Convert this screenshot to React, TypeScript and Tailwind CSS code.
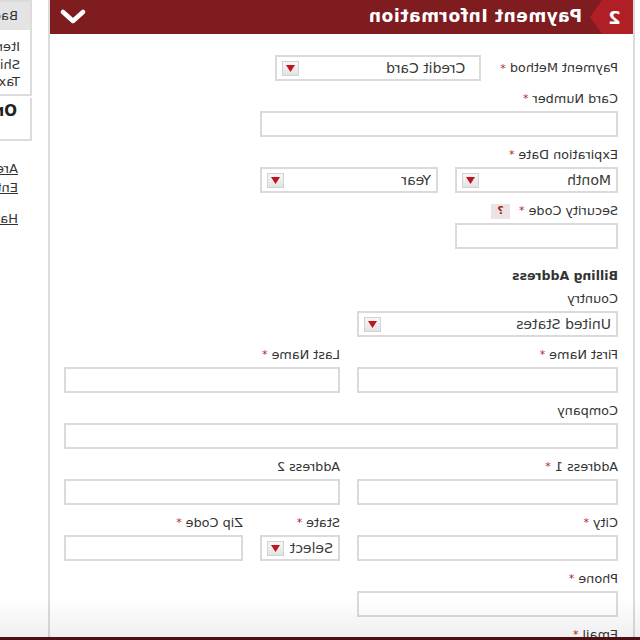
import React from "react";

const FONT = { fontFamily: '"DejaVu Sans", Verdana, sans-serif' };

function Label({ text, req, help }: { text: string; req?: boolean; help?: boolean }) {
  return (
    <div className="h-[18px] leading-[18px] mb-[3px] text-[12.8px] text-[#333] flex items-center whitespace-nowrap">
      <span>{text}</span>
      {req && <span className="ml-[4px] text-[#b3262c] text-[11px]">*</span>}
      {help && (
        <span className="ml-[9px] w-[19px] h-[15px] bg-[#ece4e4] text-[#a51c22] text-[11px] font-bold flex items-center justify-center">
          ?
        </span>
      )}
    </div>
  );
}

function Input({ className = "" }: { className?: string }) {
  return <div className={`h-[26px] border-2 border-[#dadada] bg-white ${className}`} />;
}

function Select({ value, className = "" }: { value: string; className?: string }) {
  return (
    <div
      className={`h-[26px] border-2 border-[#dadada] bg-white flex items-center pr-[5px] text-[14px] text-[#3a3a3a] ${className}`}
    >
      <span className="whitespace-nowrap">{value}</span>
      <span className="ml-auto w-[17px] h-[15px] border border-[#d2d2d2] bg-gradient-to-b from-[#f7f7f7] to-[#e3e3e3] flex items-center justify-center shrink-0">
        <svg width="9" height="7" viewBox="0 0 9 7">
          <path d="M0 0h9L4.5 7z" fill="#c0141c" />
        </svg>
      </span>
    </div>
  );
}

function Field({
  label,
  req,
  help,
  children,
}: {
  label?: string;
  req?: boolean;
  help?: boolean;
  children: React.ReactNode;
}) {
  return (
    <div>
      {label ? <Label text={label} req={req} help={help} /> : <div className="h-[21px]" />}
      {children}
    </div>
  );
}

function Payment() {
  return (
    <div className="w-[587px] ml-[5px] shrink-0 border-x-2 border-[#dcdcdc] h-[640px] bg-white">
      <div className="h-[34px] bg-[#7e1c1f] flex items-center text-white">
        <div className="h-full w-[31px] bg-[#b01f25] flex items-center justify-center pl-[6px] text-[18px] font-bold">
          2
        </div>
        <svg width="12" height="34" viewBox="0 0 12 34" className="shrink-0">
          <path d="M0 0L12 17L0 34z" fill="#b01f25" />
        </svg>
        <div className="ml-[8px] text-[17px] font-bold tracking-[0.6px]">Payment Information</div>
        <svg width="26" height="16" viewBox="0 0 26 16" className="ml-auto mr-[10px]">
          <path d="M3 3l10 9 10-9" fill="none" stroke="#fff" strokeWidth="4.5" strokeLinecap="round" strokeLinejoin="round" />
        </svg>
      </div>

      <div className="pl-[15px] pt-[21px]">
        <div className="flex items-center">
          <div className="text-[12.8px] text-[#333] whitespace-nowrap">
            Payment Method <span className="text-[#b3262c] text-[11px]">*</span>
          </div>
          <Select value="Credit Card" className="w-[206px] ml-[19px] pl-[14px]" />
        </div>

        <div className="w-[358px] flex flex-col gap-[9px] mt-[9px]">
          <Field label="Card Number" req>
            <Input />
          </Field>
          <Field label="Expiration Date" req>
            <div className="flex gap-[17px]">
              <Select value="Month" className="w-[163px] pl-[5px]" />
              <Select value="Year" className="w-[178px] pl-[5px]" />
            </div>
          </Field>
          <Field label="Security Code" req help>
            <Input className="w-[163px]" />
          </Field>
        </div>

        <div className="mt-[18px] h-[18px] leading-[18px] text-[12.5px] font-bold text-[#333]">Billing Address</div>

        <div className="w-[554px] grid grid-cols-[261px_276px] gap-x-[17px] gap-y-[9px] mt-[5px]">
          <Field label="Country">
            <Select value="United States" className="pl-[5px]" />
          </Field>
          <div />
          <Field label="First Name" req>
            <Input />
          </Field>
          <Field label="Last Name" req>
            <Input />
          </Field>
          <div className="col-span-2">
            <Field label="Company">
              <Input />
            </Field>
          </div>
          <Field label="Address 1" req>
            <Input />
          </Field>
          <Field label="Address 2">
            <Input />
          </Field>
          <Field label="City" req>
            <Input />
          </Field>
          <div className="flex gap-[17px]">
            <div className="w-[80px]">
              <Field label="State" req>
                <Select value="Select" className="pl-[5px]" />
              </Field>
            </div>
            <div className="flex-1">
              <Field label="Zip Code" req>
                <Input />
              </Field>
            </div>
          </div>
          <Field label="Phone" req>
            <Input />
          </Field>
          <div />
          <Field label="Email" req>
            <Input />
          </Field>
        </div>
      </div>
    </div>
  );
}

function Sidebar() {
  return (
    <div className="ml-[16px] w-[220px] shrink-0 text-[13px] text-[#333]">
      <div className="border-2 border-[#dcdcdc]">
        <div className="h-[28px] bg-[#e4e4e4] flex items-center pl-[12px] whitespace-nowrap">Bag Summary</div>
        <div className="pl-[10px] pt-[8px] pb-[3px] leading-[17.5px]">
          <div>Items</div>
          <div>Shipping</div>
          <div>Tax</div>
        </div>
      </div>
      <div className="border-2 border-t-0 border-[#dcdcdc] h-[43px] mt-[2px] pl-[13px] pt-[2px] text-[15px] font-bold text-[#222]">
        Order Total
      </div>
      <div className="pl-[14px] mt-[18px] leading-[19px] underline">
        <div>Are you a member?</div>
        <div>Enter a code</div>
        <div className="mt-[12px]">Have a question?</div>
      </div>
    </div>
  );
}

export default function App() {
  return (
    <div className="w-[640px] h-[640px] overflow-hidden relative bg-white [transform:scaleX(-1)]" style={FONT}>
      <div className="flex">
        <Payment />
        <Sidebar />
      </div>
      <div className="absolute left-0 right-0 bottom-[3px] h-[40px] bg-gradient-to-b from-transparent to-[#000]/[0.06]" />
      <div className="absolute left-0 right-0 bottom-0 h-[3px] bg-[#4d1012]" />
    </div>
  );
}
